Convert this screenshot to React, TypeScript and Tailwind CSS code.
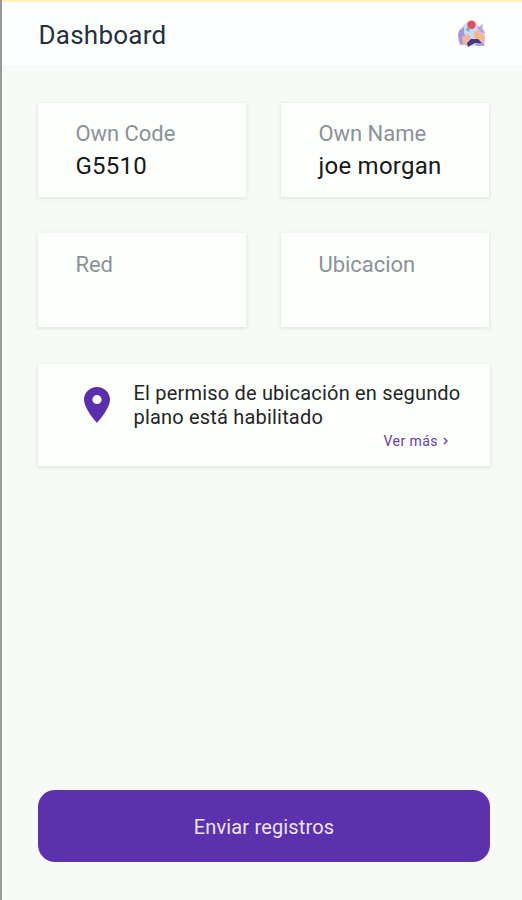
import type { ReactNode } from "react";

const card = "bg-[#fdfffd] shadow-[0_1px_3px_1px_rgba(0,0,0,0.08)]";

function InfoCard({ label, children }: { label: string; children?: ReactNode }) {
  return (
    <div className={`${card} h-[94px] pl-[37.5px] ${children ? "pt-[17px]" : "pt-[18px]"}`}>
      <div className="text-[22px] leading-[28px] tracking-[-0.05px] text-[#8b9297]">{label}</div>
      <div className="mt-[3px] text-[24px] leading-[30px] tracking-[0.25px] text-[#171819]">{children}</div>
    </div>
  );
}

function Avatar() {
  return (
    <svg width="30" height="30" viewBox="0 0 30 30">
      <path d="M2 11L6 7L10 3L18 4L22 7L26 4L25 9L28 13L28 27L18 27L8 25L3 27L1 20Z" fill="#dcd2f3" />
      <path d="M2 12L7 8L10 14L9 26L3 25L1 16Z" fill="#a994dc" />
      <path d="M7 8L12 4L19 10L20 17L11 21L7 14Z" fill="#c1dfeb" />
      <path d="M5 18L11 15L15 20L12 27L6 26Z" fill="#f2b59f" />
      <path d="M17 13L22 11L28 18L27 24L20 22L17 18Z" fill="#f4b795" />
      <path d="M10 24L14 20L21 20L26 25L18 24L11 28Z" fill="#3f3c83" />
      <path d="M18 25L27 24L27 27L20 27Z" fill="#b39fe0" />
      <path d="M20 8L23 8L26 5L25 9L28 14L25 14L22 11Z" fill="#b6a1e1" />
      <circle cx="14.5" cy="5.7" r="4.2" fill="#e64d5d" />
      <path d="M10 8L13 10L12 13L9 11Z" fill="#82a9c6" />
    </svg>
  );
}

export default function App() {
  return (
    <div className="flex h-[900px] w-[522px] flex-col border-l-2 border-[#999b9a] bg-[#f8faf8] font-['Roboto',sans-serif]">
      <header className="flex h-[66px] shrink-0 items-center justify-between border-t-2 border-[#fff3bd] bg-[#fdfffe] pl-[36.5px] pr-[35px] shadow-[0_1px_2px_rgba(0,0,0,0.02)]">
        <h1 className="pt-[2px] text-[26px] leading-[32px] tracking-[0.25px] text-[#24313d]">Dashboard</h1>
        <Avatar />
      </header>
      <main className="flex grow flex-col pl-[36px] pr-[32px] pt-[37px]">
        <div className="mr-px grid grid-cols-2 gap-x-[35px] gap-y-[36px]">
          <InfoCard label="Own Code">G5510</InfoCard>
          <InfoCard label="Own Name">joe morgan</InfoCard>
          <InfoCard label="Red" />
          <InfoCard label="Ubicacion" />
        </div>
        <section className={`${card} mt-[37px] flex h-[102px] pl-[46px] pt-[17px]`}>
          <svg className="mt-[5.5px] shrink-0" width="26" height="36" viewBox="5 2 14 20" preserveAspectRatio="none">
            <path fill="#5a2fae" d="M12 2C8.13 2 5 5.13 5 9c0 5.25 7 13 7 13s7-7.75 7-13c0-3.87-3.13-7-7-7zm0 9.5a2.5 2.5 0 010-5 2.5 2.5 0 010 5z" />
          </svg>
          <div className="ml-[23.5px] w-[334px]">
            <p className="whitespace-nowrap text-[20px] leading-[24px] tracking-[0.19px] text-[#242625]">
              El permiso de ubicación en segundo
              <br />
              plano está habilitado
            </p>
            <div className="flex items-center justify-end pr-[19px] pt-[3px] text-[14px] leading-[18px] tracking-[0.45px] text-[#6340b4]">
              Ver más
              <svg className="ml-[4.5px]" width="6" height="10" viewBox="0 0 6 10" fill="none" stroke="#6340b4" strokeWidth="1.4">
                <path d="M1 2L4 5L1 8" />
              </svg>
            </div>
          </div>
        </section>
        <button className="mb-[38px] mt-auto h-[72px] shrink-0 rounded-[17px] bg-[#5b31ad] pt-[2px] text-[20px] tracking-[0.15px] text-[#eee5fa]">
          Enviar registros
        </button>
      </main>
    </div>
  );
}
